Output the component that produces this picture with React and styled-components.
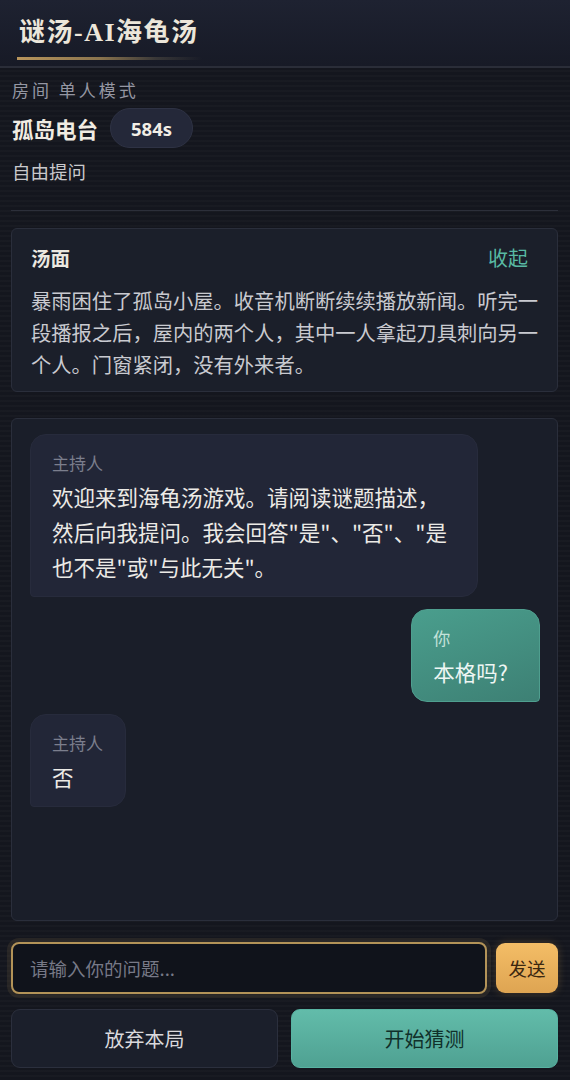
import React from "react";
import styled, { createGlobalStyle } from "styled-components";

const GlobalStyle = createGlobalStyle`
  * { box-sizing: border-box; }
  html, body {
    margin: 0;
    padding: 0;
    background: #14161e;
  }
  body {
    font-family: "Noto Sans CJK SC", "Noto Sans", sans-serif;
    color: #e6e2da;
  }
`;

const Page = styled.div`
  width: 570px;
  min-height: 1080px;
  display: flex;
  flex-direction: column;
  background-color: #14161e;
  background-image: repeating-linear-gradient(
    180deg,
    rgba(255, 255, 255, 0.018) 0px,
    rgba(255, 255, 255, 0.018) 2px,
    rgba(0, 0, 0, 0) 2px,
    rgba(0, 0, 0, 0) 5px
  );
`;

const Header = styled.header`
  height: 68px;
  padding: 16px 17px 0;
  background: linear-gradient(180deg, #1e2231 0%, #171a26 100%);
  border-bottom: 2px solid #2a2d38;
`;

const Brand = styled.h1`
  display: inline-block;
  margin: 0;
  padding: 0 3px 10px 2px;
  font-family: "Liberation Serif", "Noto Sans CJK SC", serif;
  font-size: 26px;
  line-height: 34px;
  font-weight: 700;
  letter-spacing: 1.5px;
  color: #ece6da;
  background: linear-gradient(90deg, #b8955c 0%, #8a744e 45%, rgba(90, 84, 72, 0.5) 75%, rgba(30, 34, 49, 0) 100%)
    left bottom / 100% 3px no-repeat;
`;

const Main = styled.main`
  flex: 1;
  display: flex;
  flex-direction: column;
  padding: 11px 12px 12px 11px;
`;

const RoomInfo = styled.section`
  display: flex;
  flex-direction: column;
  padding-bottom: 27px;
  border-bottom: 1px solid #2c2f3a;
`;

const RoomLabel = styled.div`
  font-size: 17px;
  line-height: 22px;
  letter-spacing: 3px;
  color: #9597a3;
  padding-left: 1px;
`;

const RoomRow = styled.div`
  display: flex;
  align-items: center;
  gap: 12px;
  margin-top: 7px;
`;

const RoomName = styled.div`
  font-size: 21.5px;
  font-weight: 700;
  color: #f0ebe2;
  padding-left: 1px;
`;

const Timer = styled.div`
  height: 40px;
  padding: 0 20px;
  display: flex;
  align-items: center;
  border-radius: 20px;
  background: #242839;
  border: 1px solid #2e3244;
  font-family: "Noto Sans", "Noto Sans CJK SC", sans-serif;
  font-size: 18.5px;
  font-weight: 700;
  color: #f2eee6;
`;

const Mode = styled.div`
  margin-top: 11px;
  font-size: 18.5px;
  line-height: 24px;
  color: #c9c9cc;
  padding-left: 1px;
`;

const Card = styled.section`
  background: #1b1f2a;
  border: 1px solid #2a2e3b;
  border-radius: 6px;
`;

const PuzzleCard = styled(Card)`
  margin-top: 17px;
  padding: 13px 12px 11px 19px;
`;

const CardHead = styled.div`
  display: flex;
  justify-content: space-between;
  align-items: center;
  height: 30px;
`;

const CardTitle = styled.h2`
  margin: 0;
  font-size: 19.5px;
  font-weight: 700;
  color: #ece8e0;
`;

const Collapse = styled.button`
  border: none;
  background: none;
  padding: 0;
  margin-right: 17px;
  font-family: inherit;
  font-size: 20px;
  color: #58b9a3;
  cursor: pointer;
`;

const PuzzleText = styled.p`
  margin: 12px 0 0;
  font-size: 20.3px;
  line-height: 32px;
  color: #c9cad0;
`;

const ChatPanel = styled(Card)`
  margin-top: 26px;
  height: 503px;
  padding: 15px 17px 15px 18px;
  background: #1a1e29;
  display: flex;
  flex-direction: column;
  gap: 12px;
`;

const Bubble = styled.div`
  align-self: ${(p) => (p.$mine ? "flex-end" : "flex-start")};
  max-width: 448px;
  padding: ${(p) => (p.$mine ? "17px 31px 12px 21px" : "17px 22px 12px 21px")};
  border-radius: ${(p) => (p.$mine ? "16px 16px 4px 16px" : "16px 16px 16px 4px")};
  background: ${(p) =>
    p.$mine ? "linear-gradient(160deg, #4a9e8d 0%, #3d8074 100%)" : "#222637"};
  border: 1px solid ${(p) => (p.$mine ? "#4f9f8f" : "#272b3c")};
`;

const Speaker = styled.div`
  font-size: 17px;
  line-height: 22px;
  color: ${(p) => (p.$mine ? "#c4e2da" : "#7b7e8d")};
`;

const Message = styled.div`
  margin-top: 5px;
  font-size: 21.5px;
  line-height: 35px;
  color: ${(p) => (p.$mine ? "#eef6f3" : "#eceae6")};
`;

const Composer = styled.div`
  margin-top: 21px;
  display: flex;
  gap: 9px;
  align-items: center;
`;

const Input = styled.input`
  flex: 1;
  min-width: 0;
  height: 52px;
  padding: 0 17px;
  border-radius: 8px;
  border: 2px solid #b39358;
  background: #10131b;
  box-shadow: 0 0 0 4px rgba(179, 147, 88, 0.12);
  font-family: inherit;
  font-size: 18.5px;
  color: #e6e2da;
  outline: none;

  &::placeholder {
    color: #777987;
  }
`;

const SendButton = styled.button`
  width: 62px;
  height: 50px;
  flex: none;
  border: none;
  border-radius: 9px;
  background: linear-gradient(180deg, #f4bd66 0%, #dea452 100%);
  box-shadow: 0 0 8px rgba(232, 170, 80, 0.25);
  font-family: inherit;
  font-size: 18.5px;
  color: #3b2710;
  cursor: pointer;
`;

const Actions = styled.div`
  margin-top: 15px;
  display: grid;
  grid-template-columns: 1fr 1fr;
  gap: 13px;
`;

const ActionButton = styled.button`
  height: 59px;
  border-radius: 9px;
  font-family: inherit;
  font-size: 20px;
  cursor: pointer;
  border: 1px solid ${(p) => (p.$primary ? "#58b3a2" : "#2b2f3d")};
  background: ${(p) =>
    p.$primary ? "linear-gradient(180deg, #62bcaa 0%, #4fa192 100%)" : "#1b1f2b"};
  color: ${(p) => (p.$primary ? "#10302a" : "#dad9dc")};
`;

const messages = [
  {
    mine: false,
    who: "主持人",
    text: '欢迎来到海龟汤游戏。请阅读谜题描述，然后向我提问。我会回答"是"、"否"、"是也不是"或"与此无关"。',
  },
  { mine: true, who: "你", text: "本格吗?" },
  { mine: false, who: "主持人", text: "否" },
];

const App = () => {
  return (
    <>
      <GlobalStyle />
      <Page>
        <Header>
          <Brand>谜汤-AI海龟汤</Brand>
        </Header>
        <Main>
          <RoomInfo>
            <RoomLabel>房间 单人模式</RoomLabel>
            <RoomRow>
              <RoomName>孤岛电台</RoomName>
              <Timer>584s</Timer>
            </RoomRow>
            <Mode>自由提问</Mode>
          </RoomInfo>

          <PuzzleCard>
            <CardHead>
              <CardTitle>汤面</CardTitle>
              <Collapse>收起</Collapse>
            </CardHead>
            <PuzzleText>
              暴雨困住了孤岛小屋。收音机断断续续播放新闻。听完一段播报之后，屋内的两个人，其中一人拿起刀具刺向另一个人。门窗紧闭，没有外来者。
            </PuzzleText>
          </PuzzleCard>

          <ChatPanel>
            {messages.map((m, i) => (
              <Bubble key={i} $mine={m.mine}>
                <Speaker $mine={m.mine}>{m.who}</Speaker>
                <Message $mine={m.mine}>{m.text}</Message>
              </Bubble>
            ))}
          </ChatPanel>

          <Composer>
            <Input placeholder="请输入你的问题..." />
            <SendButton>发送</SendButton>
          </Composer>

          <Actions>
            <ActionButton>放弃本局</ActionButton>
            <ActionButton $primary>开始猜测</ActionButton>
          </Actions>
        </Main>
      </Page>
    </>
  );
};

export default App;
